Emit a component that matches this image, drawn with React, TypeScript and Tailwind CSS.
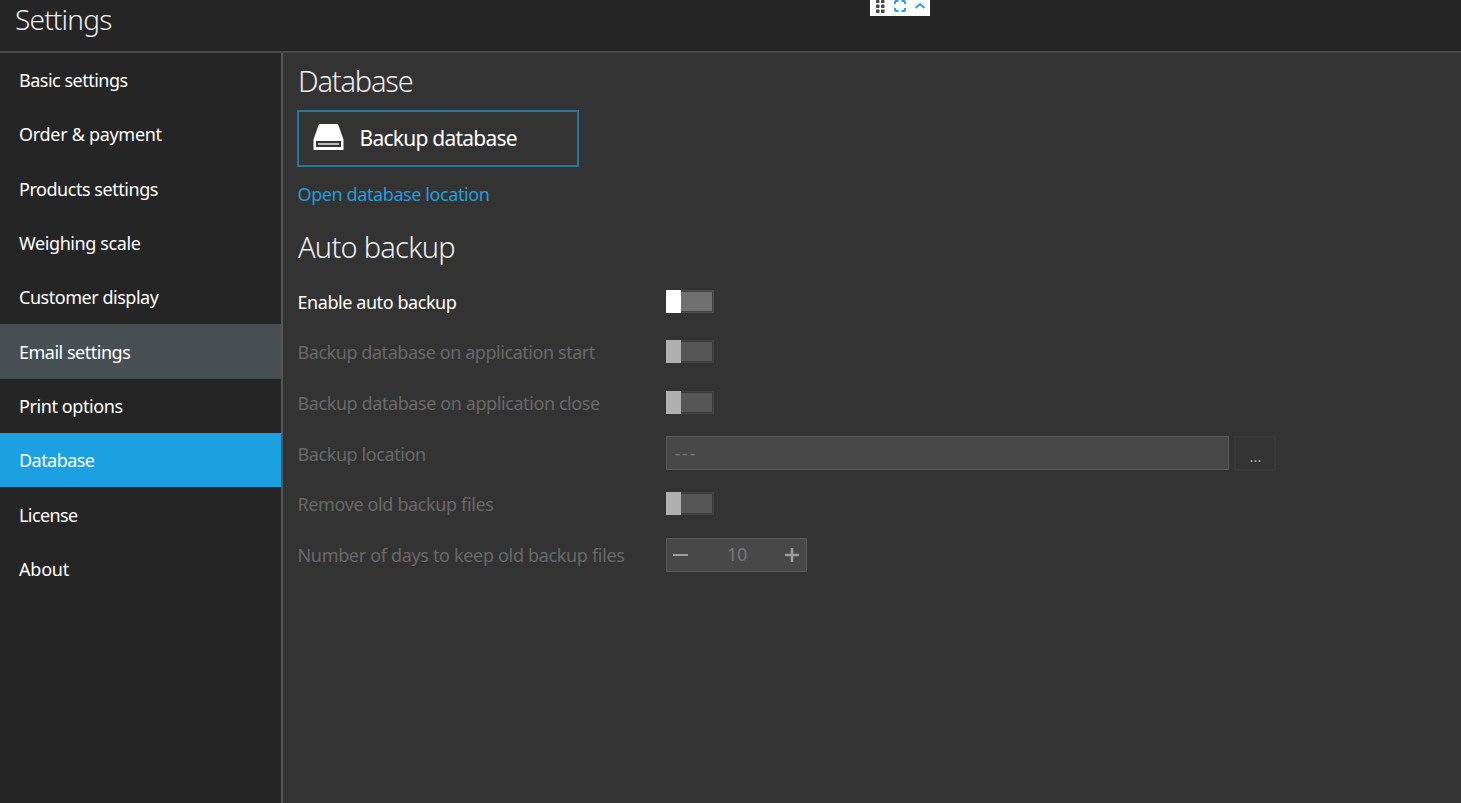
import type { ReactNode } from "react";

const navItems = [
  { label: "Basic settings", cls: "tracking-[-0.5px]", bg: "" },
  { label: "Order & payment", cls: "tracking-[-0.3px]", bg: "" },
  { label: "Products settings", cls: "tracking-[-0.46px]", bg: "" },
  { label: "Weighing scale", cls: "tracking-[-0.4px]", bg: "" },
  { label: "Customer display", cls: "tracking-[-0.47px]", bg: "" },
  { label: "Email settings", cls: "tracking-[-0.49px]", bg: "bg-[#474f52]" },
  { label: "Print options", cls: "tracking-[-0.41px]", bg: "" },
  { label: "Database", cls: "tracking-[-0.55px]", bg: "bg-[#1ba1e2]" },
  { label: "License", cls: "tracking-[-0.6px]", bg: "" },
  { label: "About", cls: "tracking-[-0.2px]", bg: "" },
];

function Toggle({ enabled = false }: { enabled?: boolean }) {
  return (
    <div className="-mt-[2px] flex h-[23px] w-[48px]">
      <div className={`w-[14.5px] ${enabled ? "bg-white" : "bg-[#b0b0b0]"}`} />
      <div className={`flex-1 border-y border-r ${enabled ? "border-[#505050]" : "border-[#434444]"}`}>
        <div className={`h-full border-y border-r ${enabled ? "border-[#424242]" : "border-[#3b3b3b]"}`}>
          <div className={`h-full ${enabled ? "bg-[#707070]" : "bg-[#565656]"}`} />
        </div>
      </div>
    </div>
  );
}

function Row({ label, cls, children }: { label: string; cls: string; children: ReactNode }) {
  return (
    <div className="flex h-[50.6px] items-center">
      <div className="w-[369px] shrink-0 whitespace-nowrap">
        <span className={`text-[18px] ${cls}`}>{label}</span>
      </div>
      {children}
    </div>
  );
}

function WindowTools() {
  return (
    <div className="absolute top-0 left-[870px] h-4 w-[60px] bg-white">
      <svg className="block h-4 w-[60px]" viewBox="0 0 60 16" fill="none">
        <g fill="#444">
          <rect x="6" y="0" width="3.500" height="3" rx="0.800" />
          <rect x="11" y="0" width="3.500" height="3" rx="0.800" />
          <rect x="6" y="4.500" width="3.500" height="3.500" rx="0.800" />
          <rect x="11" y="4.500" width="3.500" height="3.500" rx="0.800" />
          <rect x="6" y="9.500" width="3.500" height="3.500" rx="0.800" />
          <rect x="11" y="9.500" width="3.500" height="3.500" rx="0.800" />
        </g>
        <path
          d="M25 4V2Q25 1 26 1H28.500M31.500 1H34Q35 1 35 2V4M35 8V10Q35 11 34 11H31.500M28.500 11H26Q25 11 25 10V8"
          stroke="#2f9cf5"
          strokeWidth="2"
        />
        <path d="M45.500 8L50 4L54.500 8" stroke="#2f9cf5" strokeWidth="2" />
      </svg>
    </div>
  );
}

export default function App() {
  return (
    <div className="relative flex h-[803px] w-[1461px] flex-col overflow-hidden bg-[#333] font-['Noto_Sans','Open_Sans',sans-serif] text-white">
      <header className="h-[53px] shrink-0 border-b-2 border-[#484a49] bg-[#252525] pl-[15px]">
        <h1 className="text-[28px] leading-[39px] font-light tracking-[-0.8px] text-[#eee]">Settings</h1>
      </header>
      <div className="flex min-h-0 flex-1">
        <nav className="w-[283.4px] shrink-0 border-r-2 border-[#565753] bg-[#252525]">
          {navItems.map((n) => (
            <div key={n.label} className={`flex h-[54.3px] items-center pt-px pl-[19px] ${n.bg}`}>
              <span className={`text-[18px] ${n.cls}`}>{n.label}</span>
            </div>
          ))}
        </nav>
        <main className="flex-1 pl-[13.6px]">
          <h2 className="mt-[8px] pl-px text-[29px] leading-[40px] font-light tracking-[-1.2px] text-[#eee]">Database</h2>
          <button className="mt-[9px] flex h-[57px] w-[282px] items-center border-2 border-[#26779c] pl-[14px]">
            <svg className="-mt-[3px] h-[26px] w-[31px]" viewBox="0 0 31 26">
              <path
                fill="#fff"
                fillRule="evenodd"
                d="M7 0h17q1 0 1.400 1L30.500 15.500V26H0.500V15.500L5.600 1Q6 0 7 0zM3 17v6h25v-6z"
              />
              <path fill="#bbb" d="M5 19h21v2H5z" />
            </svg>
            <span className="ml-[15.5px] text-[21px] tracking-[-0.75px]">Backup database</span>
          </button>
          <div className="mt-[13px] pl-[0.5px] leading-[28px] text-[#259ddb]">
            <span className="text-[18px] tracking-[-0.4px]">Open database location</span>
          </div>
          <h2 className="mt-[18px] pl-px text-[29px] leading-[40px] font-light tracking-[-0.75px] text-[#eee]">Auto backup</h2>
          <div className="mt-[10px] pl-[0.5px] text-[#696969]">
            <Row label="Enable auto backup" cls="text-white tracking-[-0.43px]">
              <Toggle enabled />
            </Row>
            <Row label="Backup database on application start" cls="tracking-[-0.44px]">
              <Toggle />
            </Row>
            <Row label="Backup database on application close" cls="tracking-[-0.41px]">
              <Toggle />
            </Row>
            <Row label="Backup location" cls="tracking-[-0.41px]">
              <div className="-mt-[2px] flex h-[34px] w-[563px] items-center border border-[#5a5a5a] bg-[#484848] pl-[7px]">
                <span className="text-[18px] tracking-[1.8px] text-[#777]">---</span>
              </div>
              <div className="-mt-[2px] ml-[5px] flex h-[35px] w-[42px] items-center justify-center border-2 border-[#383838] pt-[6px]">
                <span className="text-[15px] text-[#a5a5a5]">...</span>
              </div>
            </Row>
            <Row label="Remove old backup files" cls="tracking-[-0.37px]">
              <Toggle />
            </Row>
            <Row label="Number of days to keep old backup files" cls="tracking-[-0.33px]">
              <div className="-mt-px flex h-[34px] w-[141px] items-center justify-between border border-[#5a5a5a] bg-[#484848] px-[6px]">
                <svg className="h-4 w-4" viewBox="0 0 16 16">
                  <path fill="#a0a0a0" d="M0 7h15v2H0z" />
                </svg>
                <span className="text-[18px] tracking-[-0.3px] text-[#777]">10</span>
                <svg className="h-4 w-4" viewBox="0 0 16 16">
                  <path fill="#a0a0a0" d="M1 6.800h14v2.400H1zM6.800 1h2.400v14H6.800z" />
                </svg>
              </div>
            </Row>
          </div>
        </main>
      </div>
      <WindowTools />
    </div>
  );
}
